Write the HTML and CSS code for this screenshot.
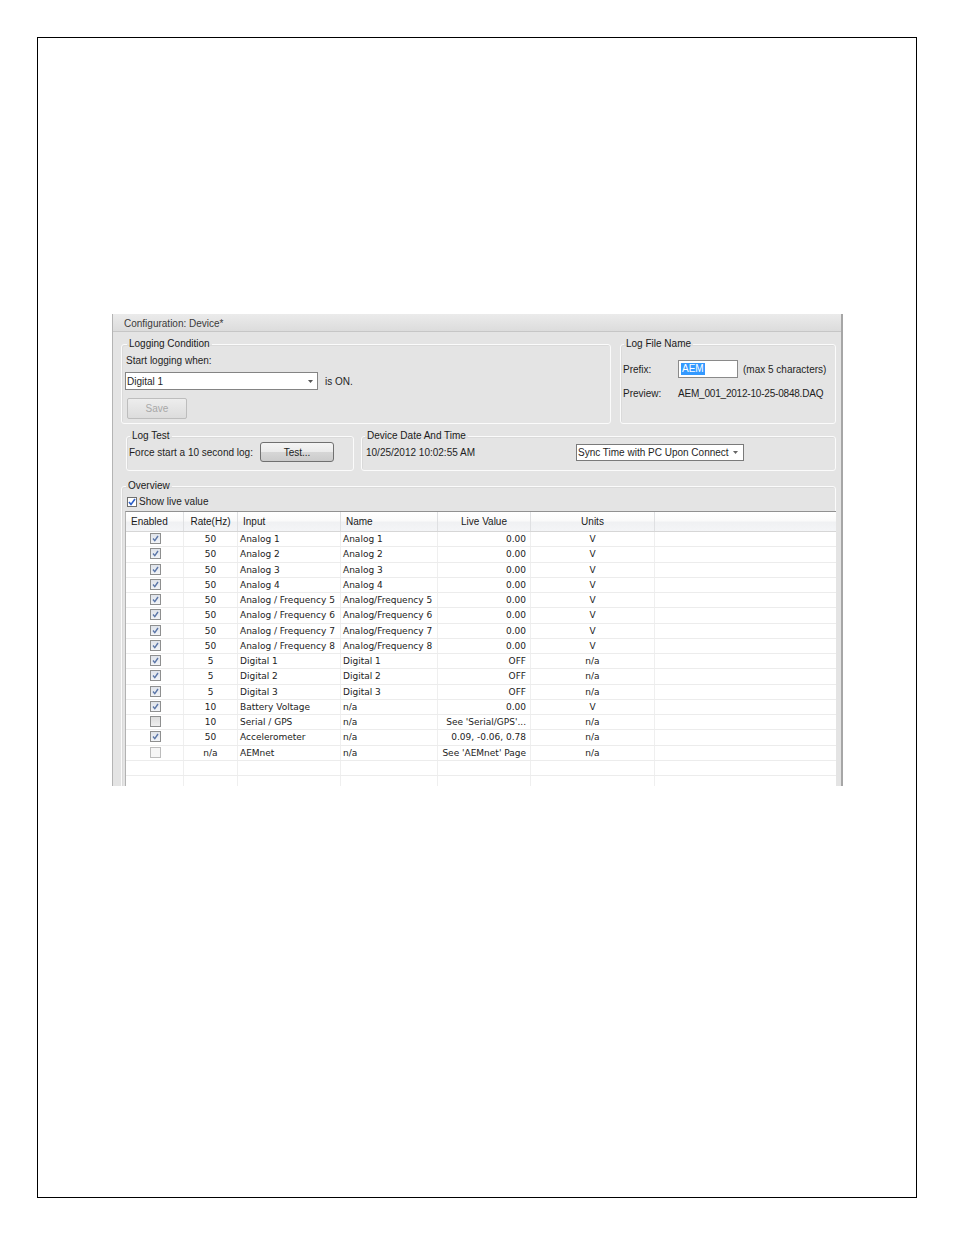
FILE: index.html
```html
<!doctype html>
<html>
    <head>
        <meta charset="utf-8">
        <link rel="stylesheet" href="styles.css">
    </head>
    <body>
        <div class="page">
            <div class="app">
                <div class="titlebar">Configuration: Device*</div>
                <div class="content">

                    <div class="row row-top">
                        <fieldset class="group logging">
                            <legend>Logging Condition</legend>
                            <div class="line start-label">Start logging when:</div>
                            <div class="select-row">
                                <div class="combo combo-input">
                                    <span>Digital 1</span>
                                    <svg class="arrow" width="5" height="3" viewBox="0 0 5 3"><path d="M0 0h5L2.5 3z" fill="#555"/></svg>
                                </div>
                                <span class="is-on">is ON.</span>
                            </div>
                            <button class="btn btn-save" disabled>Save</button>
                        </fieldset>

                        <fieldset class="group filename">
                            <legend>Log File Name</legend>
                            <div class="field prefix">
                                <span class="lbl">Prefix:</span>
                                <span class="textbox"><span class="hl">AEM</span></span>
                                <span class="hint">(max 5 characters)</span>
                            </div>
                            <div class="field preview">
                                <span class="lbl">Preview:</span>
                                <span>AEM_001_2012-10-25-0848.DAQ</span>
                            </div>
                        </fieldset>
                    </div>

                    <div class="row row-mid">
                        <fieldset class="group logtest">
                            <legend>Log Test</legend>
                            <div class="test-row">
                                <span>Force start a 10 second log:</span>
                                <button class="btn btn-test">Test...</button>
                            </div>
                        </fieldset>

                        <fieldset class="group datetime">
                            <legend>Device Date And Time</legend>
                            <div class="test-row">
                                <span class="date">10/25/2012 10:02:55 AM</span>
                                <div class="combo combo-sync">
                                    <span>Sync Time with PC Upon Connect</span>
                                    <svg class="arrow" width="5" height="3" viewBox="0 0 5 3"><path d="M0 0h5L2.5 3z" fill="#666"/></svg>
                                </div>
                            </div>
                        </fieldset>
                    </div>

                    <fieldset class="group overview">
                        <legend>Overview</legend>
                        <label class="live">
                            <span class="chk chk-live"><svg width="8" height="8" viewBox="0 0 8 8"><path d="M1 4l2 2.5L7 1" fill="none" stroke="#2b5fc8" stroke-width="1.6"/></svg></span>
                            Show live value
                        </label>

                        <div class="grid" id="grid">
                            <div class="gr head">
                                <div class="hc left">Enabled</div>
                                <div class="hc center">Rate(Hz)</div>
                                <div class="hc left">Input</div>
                                <div class="hc left">Name</div>
                                <div class="hc center">Live Value</div>
                                <div class="hc center">Units</div>
                                <div class="hc"></div>
                            </div>
                        </div>
                    </fieldset>

                </div>
            </div>
        </div>

        <script>
            // channel rows: enabled, rate, input, name, live value, units
            var rows = [
                [1, "50", "Analog 1", "Analog 1", "0.00", "V"],
                [1, "50", "Analog 2", "Analog 2", "0.00", "V"],
                [1, "50", "Analog 3", "Analog 3", "0.00", "V"],
                [1, "50", "Analog 4", "Analog 4", "0.00", "V"],
                [1, "50", "Analog / Frequency 5", "Analog/Frequency 5", "0.00", "V"],
                [1, "50", "Analog / Frequency 6", "Analog/Frequency 6", "0.00", "V"],
                [1, "50", "Analog / Frequency 7", "Analog/Frequency 7", "0.00", "V"],
                [1, "50", "Analog / Frequency 8", "Analog/Frequency 8", "0.00", "V"],
                [1, "5", "Digital 1", "Digital 1", "OFF", "n/a"],
                [1, "5", "Digital 2", "Digital 2", "OFF", "n/a"],
                [1, "5", "Digital 3", "Digital 3", "OFF", "n/a"],
                [1, "10", "Battery Voltage", "n/a", "0.00", "V"],
                [0, "10", "Serial / GPS", "n/a", "See 'Serial/GPS'...", "n/a"],
                [1, "50", "Accelerometer", "n/a", "0.09, -0.06, 0.78", "n/a"],
                [2, "n/a", "AEMnet", "n/a", "See 'AEMnet' Page", "n/a"],
                null, null
            ];
            var tick = '<svg width="7" height="7" viewBox="0 0 7 7"><path d="M1 3.5l1.8 2.2L6 1" fill="none" stroke="#5b76a8" stroke-width="1.4"/></svg>';
            var grid = document.getElementById("grid");
            for (var i = 0; i < rows.length; i++) {
                var r = rows[i], html;
                if (r == null) {
                    html = '<div></div><div></div><div></div><div></div><div></div><div></div><div></div>';
                } else {
                    var box;
                    if (r[0] == 1) box = '<span class="chk chk-on">' + tick + '</span>';
                    else if (r[0] == 0) box = '<span class="chk chk-off"></span>';
                    else box = '<span class="chk chk-dim"></span>';
                    html = '<div class="c center box">' + box + '</div>' +
                        '<div class="c center">' + r[1] + '</div>' +
                        '<div class="c left">' + r[2] + '</div>' +
                        '<div class="c left">' + r[3] + '</div>' +
                        '<div class="c right">' + r[4] + '</div>' +
                        '<div class="c center">' + r[5] + '</div>' +
                        '<div class="c"></div>';
                }
                var row = document.createElement("div");
                row.className = "gr";
                row.innerHTML = html;
                grid.appendChild(row);
            }
        </script>
    </body>
</html>
```

FILE: styles.css
```css
body {
    margin:0;
    font-family:"Liberation Sans", Arial, sans-serif;
    font-size:10px;
    color:#1e1e1e;
}

.page {
    margin:37px 0 0 37px;
    width:804px;
    height:883px;
    border:1px solid #000;
    padding:276px 0 0 74px;
}

.app {
    width:731px;
    height:472px;
    overflow:hidden;
    background:#e4e4e4;
    border-left:1px solid #b4b4b4;
    border-right:2px solid #a6a6a6;
    box-sizing:border-box;
}

.titlebar {
    height:16px;
    padding-top:1px;
    line-height:17px;
    padding-left:11px;
    color:#3a3a3a;
    background:linear-gradient(#ebebeb, #dcdcdc);
    border-bottom:1px solid #c6c6c6;
}

.content {
    padding:0 5px 0 8px;
}

.row {
    display:flex;
}
.row-top { margin-top:6px; gap:9px; }
.row-mid { margin-top:6px; gap:7px; margin-left:5px; }

.group {
    margin:0;
    min-width:0;
    border:1px solid #fbfbfb;
    border-radius:3px;
    padding:0 4px 4px 4px;
    box-shadow:inset 1px 1px 0 #dadada;
}
.group legend {
    margin-left:1px;
    padding:0 2px;
    line-height:12px;
    color:#1a1a1a;
}

.line { line-height:12px; }

.logging { width:490px; box-sizing:border-box; }
.start-label { margin-top:5px; }

.select-row {
    display:flex;
    align-items:center;
    margin-top:5px;
}

.combo {
    position:relative;
    background:#fff;
    box-sizing:border-box;
    display:flex;
    align-items:center;
}
.combo .arrow { position:absolute; top:50%; margin-top:-1px; }

.combo-input {
    width:193px;
    height:18px;
    margin-left:-1px;
    border:1px solid #848484;
    padding-left:1px;
}
.combo-input .arrow { right:4px; }

.is-on { margin-left:7px; }

.btn {
    font:inherit;
    box-sizing:border-box;
    padding:0;
    border-radius:2px;
}
.btn-save {
    display:block;
    width:60px;
    height:21px;
    margin:8px 0 0 1px;
    border:1px solid #bdbdbd;
    background:linear-gradient(#ededed, #dcdcdc);
    color:#a8a8a8;
}

.filename { width:216px; box-sizing:border-box; padding-left:2px; }
.field { display:flex; align-items:center; }
.field .lbl { width:55px; }
.prefix { margin-top:10px; height:18px; }
.preview { margin-top:10px; line-height:12px; letter-spacing:-0.2px; }
.preview .lbl { letter-spacing:0; }

.textbox {
    width:60px;
    height:18px;
    box-sizing:border-box;
    border:1px solid #8a8a8a;
    background:#fff;
    padding:2px 0 0 2px;
}
.hl {
    display:inline-block;
    background:#3399ff;
    color:#fff;
    line-height:12px;
    padding:0 1px;
}
.hint { margin-left:5px; }

.logtest { width:228px; box-sizing:border-box; padding:0 2px 8px 2px; }
.test-row {
    display:flex;
    align-items:center;
    height:20px;
}
.btn-test {
    width:74px;
    height:20px;
    margin-left:7px;
    border:1px solid #707070;
    border-radius:3px;
    background:linear-gradient(#f4f4f4 0%, #ebebeb 48%, #d6d6d6 52%, #cbcbcb 100%);
    color:#222;
}

.datetime { flex:1; padding:0 2px 8px 4px; }
.datetime legend { margin-left:-1px; }
.date { width:210px; }

.combo-sync {
    width:168px;
    height:17px;
    border:1px solid #7a7a7a;
    padding-left:1px;
}
.combo-sync .arrow { right:5px; }

.overview {
    margin-top:9px;
    padding:0 0 0 3px;
    height:400px;
}

.live {
    display:flex;
    align-items:center;
    margin-top:4px;
    line-height:12px;
    margin-left:2px;
}

.chk {
    display:inline-flex;
    align-items:center;
    justify-content:center;
    box-sizing:border-box;
}
.chk-live {
    width:10px;
    height:10px;
    border:1px solid #6e6e6e;
    background:#fff;
    margin-right:2px;
}

.grid {
    margin-top:3px;
    width:711px;
    background:#fff;
    border-top:1px solid #909090;
    border-left:1px solid #b2b2b2;
    box-sizing:border-box;
    font-family:"DejaVu Sans", Verdana, sans-serif;
    font-size:9px;
    color:#222;
}

.gr {
    display:grid;
    grid-template-columns:58px 54px 103px 97px 93px 124px 1fr;
    height:15.27px;
    box-sizing:border-box;
    border-bottom:1px solid #ececec;
    line-height:14px;
}
.gr > div {
    border-right:1px solid #efefef;
    white-space:nowrap;
    overflow:hidden;
}
.gr > div:last-child { border-right:none; }

.head {
    height:20px;
    line-height:19px;
    border-bottom:1px solid #d6d6d6;
    background:linear-gradient(#ffffff 0%, #fafafa 45%, #f0f1f3 55%, #f4f5f7 100%);
    font-family:"Liberation Sans", Arial, sans-serif;
    font-size:10px;
    color:#1a1a1a;
}
.head > div { border-right:1px solid #dfe0e2; }

.hc.left { padding-left:5px; }
.center { text-align:center; }
.c.left { padding-left:2px; }
.c.right { text-align:right; padding-right:4px; }
.c.box { padding-left:2px; }
.c.center .chk { vertical-align:middle; margin-top:-2px; }

.chk-on, .chk-off, .chk-dim {
    width:11px;
    height:11px;
}
.chk-on {
    border:1px solid #8e8f8f;
    background:linear-gradient(#dfe3ea, #f2f4f7);
}
.chk-off {
    border:1px solid #8e8f8f;
    background:linear-gradient(#dcdcdc, #efefef);
}
.chk-dim {
    border:1px solid #bcbcbc;
    background:#f6f6f6;
}
```
